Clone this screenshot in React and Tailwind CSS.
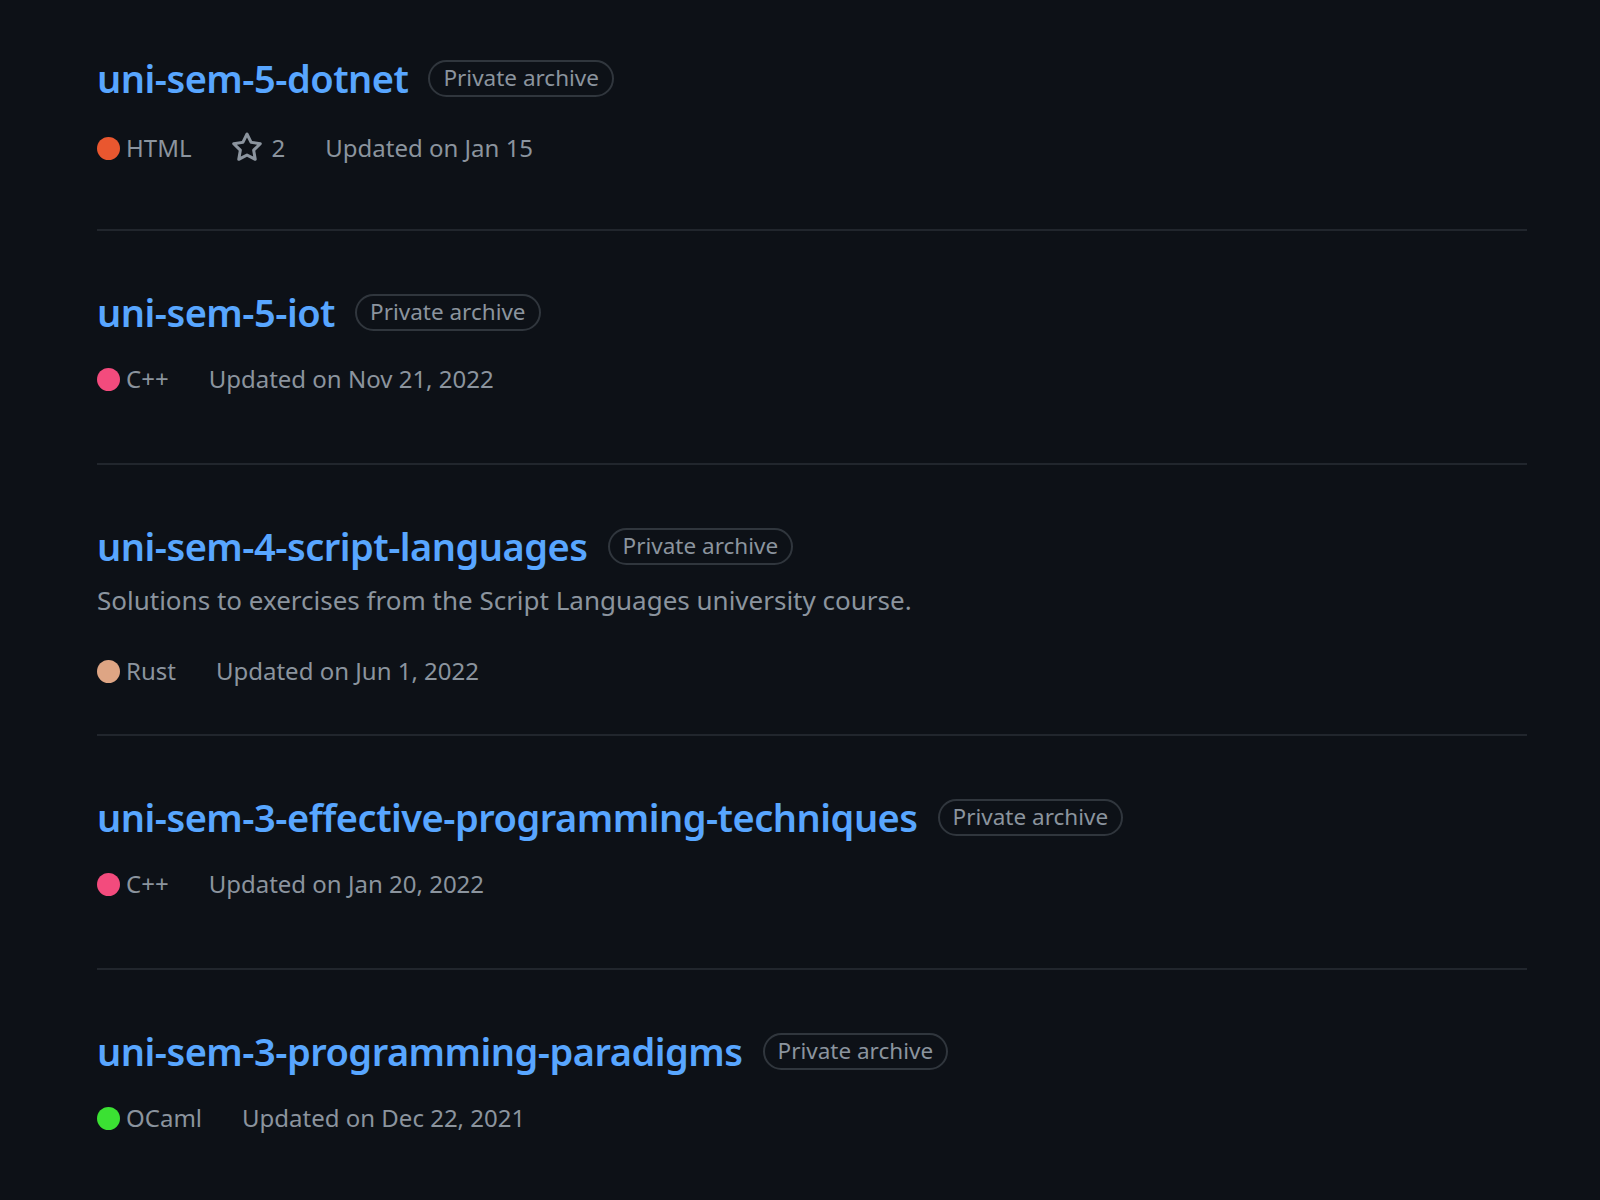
import React from 'react';

const repos = [
    { name: 'uni-sem-5-dotnet', lang: 'HTML', color: '#e9572f', stars: 2, updated: 'Jan 15' },
    { name: 'uni-sem-5-iot', lang: 'C++', color: '#f34b7d', updated: 'Nov 21, 2022' },
    {
        name: 'uni-sem-4-script-languages',
        desc: 'Solutions to exercises from the Script Languages university course.',
        lang: 'Rust',
        color: '#dea584',
        updated: 'Jun 1, 2022',
    },
    { name: 'uni-sem-3-effective-programming-techniques', lang: 'C++', color: '#f34b7d', updated: 'Jan 20, 2022' },
    { name: 'uni-sem-3-programming-paradigms', lang: 'OCaml', color: '#3be133', updated: 'Dec 22, 2021' },
];

const StarIcon = () => (
    <svg viewBox="0 0 16 16" width="32" height="32" fill="currentColor" className="shrink-0">
        <path d="M8 .25a.75.75 0 0 1 .673.418l1.882 3.815 4.21.612a.75.75 0 0 1 .416 1.279l-3.046 2.97.719 4.192a.751.751 0 0 1-1.088.791L8 12.347l-3.766 1.98a.75.75 0 0 1-1.088-.79l.72-4.194L.818 6.374a.75.75 0 0 1 .416-1.28l4.21-.611L7.327.668A.75.75 0 0 1 8 .25Zm0 2.445L6.615 5.5a.75.75 0 0 1-.564.41l-3.097.45 2.24 2.184a.75.75 0 0 1 .216.664l-.528 3.084 2.769-1.456a.75.75 0 0 1 .698 0l2.77 1.456-.53-3.084a.75.75 0 0 1 .216-.664l2.24-2.183-3.096-.45a.75.75 0 0 1-.564-.41L8 2.694Z" />
    </svg>
);

const RepoItem = ({ repo }) => {
    // rows with a star link sit a little lower in the original
    const metaTop = repo.desc ? 'mt-[35px]' : repo.stars ? 'mt-[29px]' : 'mt-[26px]';
    const bottom = repo.desc ? 'pb-[47px]' : repo.stars ? 'pb-[65px]' : 'pb-[68px]';

    return (
        <li className={`border-b-2 border-[#21262d] pt-[56px] ${bottom}`}>
            {/* Title + label */}
            <div className="flex items-center h-[50px]">
                <a className="text-[38px] leading-[50px] font-semibold text-[#58a6ff] tracking-[-0.5px]">
                    {repo.name}
                </a>
                <span className="ml-[20px] h-[37px] px-[13px] flex items-center rounded-full border-2 border-[#30363d] text-[22.5px] text-[#8b949e]">
                    Private archive
                </span>
            </div>

            {repo.desc && (
                <p className="mt-[9px] text-[26px] leading-[40px] text-[#8b949e]">{repo.desc}</p>
            )}

            {/* Meta */}
            <div className={`flex items-center h-[32px] text-[24px] text-[#8b949e] ${metaTop}`}>
                <span className="flex items-center mr-[40px]">
                    <span className="w-[23px] h-[23px] rounded-full mr-[6px]" style={{ backgroundColor: repo.color }} />
                    {repo.lang}
                </span>
                {repo.stars && (
                    <span className="flex items-center gap-[8px] mr-[40px]">
                        <StarIcon />
                        {repo.stars}
                    </span>
                )}
                <span>Updated on {repo.updated}</span>
            </div>
        </li>
    );
};

export default function App() {
    return (
        <div className="min-h-[1200px] bg-[#0d1117] overflow-hidden" style={{ fontFamily: '"Noto Sans", "Open Sans", sans-serif' }}>
            <ul className="ml-[97px] w-[1430px] -mt-[3px]">
                {repos.map(repo => (
                    <RepoItem key={repo.name} repo={repo} />
                ))}
            </ul>
        </div>
    );
}
